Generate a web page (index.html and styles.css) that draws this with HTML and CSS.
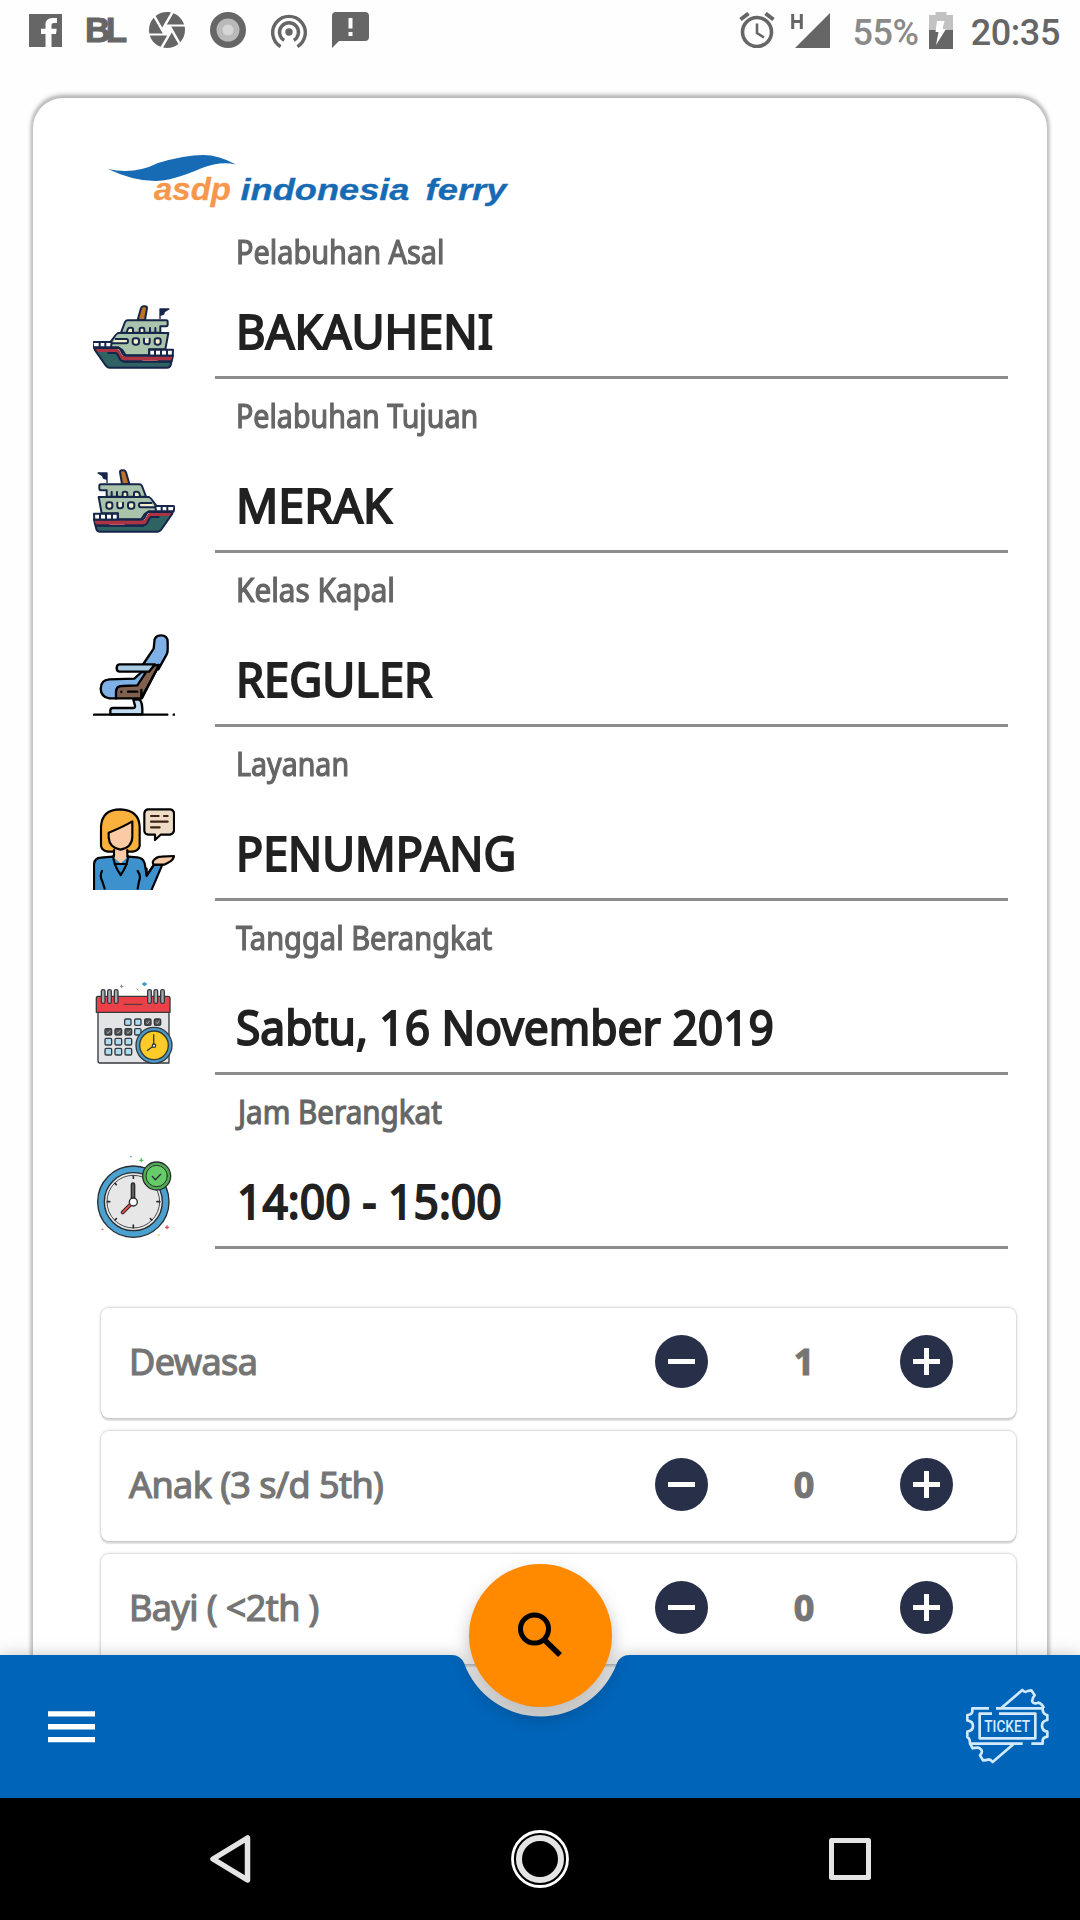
FILE: index.html
```html
<!DOCTYPE html>
<html lang="id">
<head>
<meta charset="utf-8">
<title>ASDP Indonesia Ferry</title>
<link rel="stylesheet" href="styles.css">
</head>
<body>
<header class="status">
  <div class="status-left">
    <svg width="33" height="33" viewBox="0 0 33 33"><path fill="#666" d="M0 0H33V33H22.5V20H27L27.7 14.700H22.500V11Q22.500 9 25 9H28V4H23.500Q16.500 4 16.500 10.500V14.700H12V20H16.500V33H0Z"/></svg>
    <span class="bl">BL</span>
    <svg class="aperture" width="36" height="36" viewBox="2 2 20 20"><path fill="#666" d="M9.400 10.500l4.770-8.260C13.470 2.090 12.750 2 12 2c-2.400 0-4.600.850-6.320 2.250l3.660 6.350.060-.100zM21.540 9c-.920-2.920-3.150-5.260-6-6.340L11.880 9h9.660zm.260 1h-7.490l.290.500 4.760 8.250C21 16.970 22 14.610 22 12c0-.690-.070-1.350-.200-2zM8.540 12l-3.900-6.750C3.010 7.030 2 9.390 2 12c0 .690.070 1.350.200 2h7.490l-1.150-2zm-6.080 3c.920 2.920 3.150 5.260 6 6.340L12.120 15H2.460zm11.270 0l-3.900 6.760c.700.150 1.420.240 2.170.240 2.400 0 4.600-.850 6.320-2.250l-3.660-6.350-.930 1.600z"/></svg>
    <svg class="disc" width="36" height="36" viewBox="0 0 36 36"><circle cx="18" cy="18" r="18" fill="#666"/><circle cx="18" cy="18" r="11.500" fill="#b9b9b9"/><circle cx="18" cy="18" r="5.500" fill="#d6d6d6"/></svg>
    <svg class="cast" width="36" height="34" viewBox="0 0 36 34"><g fill="none" stroke="#666" stroke-width="3.400"><path d="M9.600 32.600A16.300 16.300 0 1 1 26.400 32.600"/><path d="M13.200 26.400A9.500 9.500 0 1 1 22.800 26.400"/></g><circle cx="18" cy="18" r="3.700" fill="#666"/></svg>
    <svg class="chat" width="37" height="36" viewBox="0 0 37 36"><path fill="#666" d="M4 0H33Q37 0 37 4V25Q37 29 33 29H7L0 36V4Q0 0 4 0Z"/><path stroke="#fff" stroke-width="4" d="M18.500 6V16.500M18.500 20V24"/></svg>
  </div>
  <div class="status-right">
    <svg width="36" height="36" viewBox="0 0 36 36"><g fill="none" stroke="#666"><circle cx="18" cy="20" r="14.500" stroke-width="3.600"/><path stroke-width="4" d="M1.500 7.500L9.500 1.500M26.500 1.500L34.500 7.500"/><path stroke-width="2.600" d="M18 11.500V21L25 25.500"/></g></svg>
    <svg class="signal" width="40" height="36" viewBox="0 0 40 36"><path fill="#666" d="M39 1V36H4Z"/><path fill="none" stroke="#666" stroke-width="3" d="M1.700 2V17M10.300 2V17M1.700 9.500H10.300"/></svg>
    <span class="percent">55%</span>
    <svg class="battery" width="24" height="37" viewBox="0 0 24 37"><path fill="#c2c2c2" d="M6.500 0H17.500V3H24V18H0V3H6.500Z"/><path fill="#666" d="M0 18H24V37H0Z"/><path fill="#fff" d="M8 9H15.500L13.500 17H17L7 33L9.500 20H6.500Z"/></svg>
    <span class="clock">20:35</span>
  </div>
</header>

<main class="screen">
  <section class="card">
    <svg class="logo" width="404" height="60" viewBox="106 150 404 60">
      <path fill="#176bb5" d="M108 169Q134 175 158 163Q185 155 203 155Q219 155 236 164.500Q220 161 202 168Q172 181 155 181Q133 181 108 169Z"/>
      <g font-family="Liberation Sans, Arial, sans-serif" font-weight="bold" font-style="italic" stroke-width=".3">
        <text x="154" y="200" font-size="32" fill="#f7974b" stroke="#f7974b" textLength="77" lengthAdjust="spacingAndGlyphs">asdp</text>
        <text x="240.500" y="200" font-size="30" fill="#176bb5" stroke="#176bb5" textLength="169" lengthAdjust="spacingAndGlyphs">indonesia</text>
        <text x="425.500" y="200" font-size="30" fill="#176bb5" stroke="#176bb5" textLength="81" lengthAdjust="spacingAndGlyphs">ferry</text>
      </g>
    </svg>

    <div class="row row-first">
      <svg class="icon" viewBox="39 240 246 246"><use href="#ship" transform="translate(321 0) scale(-1 1)"/></svg>
      <div class="field"><span class="label origin-label">Pelabuhan Asal</span><span class="value origin">BAKAUHENI</span></div>
    </div>
    <div class="row">
      <svg class="icon" viewBox="39 240 246 246">
        <g id="ship" stroke="#16264a" stroke-width="6" stroke-linejoin="round" stroke-linecap="round">
          <path fill="#bd7426" d="M120 276Q120 271 126 271H131Q136 271 138 277L148 312H126Z"/>
          <path fill="#16264a" stroke-width="4" d="M54 279H81V308V298L70 294L68 287Z"/>
          <path fill="#a9c4ab" d="M62 313H178Q183 313 186 318L198 350H80V331H62Q58 331 58 325V318Q58 313 62 313Z"/>
          <path fill="#f4f0cc" d="M95 348V336M111 336V348M128 348V340Q128 335 133 335H137Q142 335 142 340V348M162 348V340Q162 335 167 335H171Q176 335 178 340L180 348"/>
          <path fill="#a9c4ab" d="M56 351H207Q214 355 219 364L231 380V394H206L194 402L184 418H114V400H65Z"/>
          <rect x="79" y="367" width="18" height="19" rx="7" fill="#f4f0cc"/>
          <path fill="#f4f0cc" d="M112 368V379Q113 385 120 385Q129 385 129 378V368"/>
          <rect x="144" y="367" width="19" height="19" rx="7" fill="#f4f0cc"/>
          <path fill="#f4f0cc" d="M214 369H182Q177 369 177 376Q177 382 182 382H224"/>
          <path fill="#fff" d="M42 401H113V419H43ZM60 401V417M78 401V417M96 401V417M226 378H279Q283 378 283 382L281 394H228ZM245 379V393M262 379V393"/>
          <path fill="#2f6262" d="M42 418L49 447Q51 455 60 455H232Q240 455 245 447L277 401H215L190 437H46Z"/>
          <path fill="#ae3443" stroke="none" d="M44 421H187Q194 421 197 414L203 403Q206 399 212 399H274L268 408H218Q211 408 209 412L200 428Q196 434 188 434H48Z"/>
          <path fill="none" d="M43 419H184Q190 419 193 414L199 402Q202 396 209 396H279M48 436H86M136 436H190Q197 436 200 431L208 416Q210 411 217 411H236"/>
        </g>
      </svg>
      <div class="field"><span class="label destination-label">Pelabuhan Tujuan</span><span class="value destination">MERAK</span></div>
    </div>
    <div class="row">
      <svg class="icon" viewBox="39 72 246 246">
        <g stroke="#000" stroke-width="7" stroke-linejoin="round" stroke-linecap="round">
          <path fill="#7fb0e6" d="M223 96Q223 76 243 76Q263 76 263 96V120Q263 127 260 133L235 178L190 162L221 116Z"/>
          <path fill="#7fb0e6" d="M185 186H205V210L185 240H110V265H88Q63 262 62 236Q62 210 88 208L163 206Z"/>
          <path fill="#82604e" d="M237 165L186 265H108V244Q110 228 125 228L172 226L211 167Z"/>
          <path fill="none" d="M184 240V264L234 172"/>
          <path fill="none" d="M124 245V246M144 245H172"/>
          <path fill="#a9cbe4" d="M118 163H225L207 185H118Q110 184 110 174Q110 164 118 163Z"/>
          <path fill="#c1dcf1" d="M160 269H180Q187 281 187 296V313H91V301Q92 294 99 294H159Q166 294 165 287Z"/>
          <path fill="none" d="M42 314H262M281 314H284"/>
        </g>
      </svg>
      <div class="field"><span class="label ship-class-label">Kelas Kapal</span><span class="value ship-class">REGULER</span></div>
    </div>
    <div class="row">
      <svg class="icon" viewBox="39 594 246 246">
        <g stroke="#000" stroke-width="6.500" stroke-linejoin="round" stroke-linecap="round">
          <path fill="#f9b03d" d="M63 650Q66 598 121 598Q177 600 179 650V708Q176 722 158 725H84Q66 722 63 708Z"/>
          <path fill="#3d91cc" d="M42 846V764Q43 744 62 743L98 740L122 765L143 740L172 742Q190 744 194 760L200 796L222 764H247L212 846Z"/>
          <path fill="#f4ae68" d="M104 763H140L122 794Z" stroke-width="4"/>
          <path fill="#3d91cc" d="M99 739Q104 770 122 795Q140 770 145 739"/>
          <path fill="#fccba5" stroke="none" d="M105 715H139V745L122 760L104 745Z"/>
          <path fill="#fccba5" d="M86 668Q130 650 157 634V680Q156 713 121 719Q88 713 86 682Z"/>
          <path fill="none" d="M102 720V739M142 720V739M104 762H140M66 783Q58 798 67 814L74 836M173 783Q184 798 177 814L173 836M200 776V798L222 764"/>
          <path fill="#fccba5" d="M222 764Q216 760 220 752Q230 740 244 740L282 738Q280 752 264 758L252 764Z"/>
          <path fill="#efdcc6" d="M203 598H271Q282 600 282 611V662Q281 671 270 674H242L225 690V674H205Q194 673 193 663V610Q194 600 203 598Z"/>
          <path fill="none" stroke="#3c2415" d="M213 618H236M252 618H263M213 635H263M213 652H239"/>
        </g>
      </svg>
      <div class="field"><span class="label service-label">Layanan</span><span class="value service">PENUMPANG</span></div>
    </div>
    <div class="row">
      <svg class="icon" viewBox="39 66 246 246">
        <g stroke="#35393d" stroke-width="4" stroke-linejoin="round">
          <path fill="#e3e4e6" d="M54 155H267V309H60Q54 309 54 302Z"/>
          <path fill="#ea4148" d="M54 109H264Q270 109 270 115V157H49V115Q49 109 54 109Z"/>
          <path fill="none" stroke-width="3" d="M131 133H187"/>
          <g fill="#a5a8ab"><rect x="64" y="89" width="11" height="41" rx="5"/><rect x="83" y="89" width="11" height="41" rx="5"/><rect x="103" y="89" width="11" height="41" rx="5"/><rect x="203" y="89" width="11" height="41" rx="5"/><rect x="222" y="89" width="11" height="41" rx="5"/><rect x="242" y="89" width="11" height="41" rx="5"/></g>
          <g fill="#abdcf2"><rect x="134" y="177" width="19" height="19" rx="4"/><rect x="164" y="177" width="19" height="19" rx="4"/><rect x="164" y="206" width="19" height="19" rx="4"/><rect x="75" y="235" width="20" height="20" rx="4"/><rect x="105" y="235" width="20" height="20" rx="4"/><rect x="135" y="235" width="20" height="20" rx="4"/><rect x="75" y="265" width="20" height="20" rx="4"/><rect x="105" y="265" width="20" height="20" rx="4"/><rect x="135" y="265" width="20" height="20" rx="4"/></g>
          <g fill="#555"><rect x="194" y="177" width="19" height="19" rx="4"/><rect x="223" y="177" width="19" height="19" rx="4"/><rect x="75" y="206" width="20" height="19" rx="4"/><rect x="105" y="206" width="20" height="19" rx="4"/><rect x="135" y="206" width="20" height="19" rx="4"/></g>
          <path fill="none" stroke="#b5b5b5" stroke-width="2.500" d="M199 187L203 191L209 182M228 187L232 191L238 182M80 216L84 220L91 211M110 216L114 220L121 211M140 216L144 220L151 211"/>
          <circle cx="222" cy="256" r="54" fill="#4b9ac6"/>
          <circle cx="222" cy="256" r="43" fill="#fccb27"/>
          <path fill="none" d="M221 223V257L201 272"/>
          <circle cx="222" cy="257" r="5" fill="#fff"/>
        </g>
        <path fill="none" stroke="#4598cb" stroke-width="6" d="M187 72H200M193.500 67V78"/><path fill="none" stroke="#888" stroke-width="3" d="M120 79H130M125 74V84M170 86L175 91"/>
      </svg>
      <div class="field"><span class="label date-label">Tanggal Berangkat</span><span class="value date">Sabtu, 16 November 2019</span></div>
    </div>
    <div class="row">
      <svg class="icon" viewBox="39 588 246 246">
        <g stroke="#292d30" stroke-width="4" stroke-linecap="round">
          <circle cx="160" cy="725" r="107" fill="#4ba1cf"/>
          <circle cx="160" cy="725" r="87" fill="#e9e9ea"/>
          <circle cx="160" cy="725" r="79" fill="#e7e7e8" stroke-width="2.500"/>
          <path fill="none" stroke-width="5" d="M160 648V655M160 795V803M82 725H89M231 725H239M105 670L109 674M211 674L215 670M105 780L109 776M211 776L215 780"/>
          <path stroke-width="14" d="M159 674V722"/><path stroke="#777" stroke-width="4" d="M159 674V722"/>
          <path stroke-width="12" d="M155 730L128 757"/><path stroke="#e64c48" stroke-width="6" d="M155 730L128 757"/>
          <circle cx="160" cy="726" r="12" fill="#fff"/>
          <circle cx="230" cy="648" r="42" fill="#4fae52"/>
          <circle cx="230" cy="648" r="32" fill="#68cb6a" stroke-width="3"/>
          <path fill="none" d="M217 649L226 659L242 643"/>
        </g>
        <g fill="none" stroke-width="4"><path stroke="#55c064" d="M178 601H190M184 595V607"/><path stroke="#e64c48" d="M255 802H267M261 796V808M65 808H70"/><path stroke="#4ba1cf" d="M150 590H155"/><path stroke="#f7d46a" d="M232 825H240"/></g>
      </svg>
      <div class="field"><span class="label time-label">Jam Berangkat</span><span class="value time">14:00 - 15:00</span></div>
    </div>

    <div class="counters">
      <div class="counter"><span class="kind">Dewasa</span><i class="btn"></i><b class="num">1</b><i class="btn plus"></i></div>
      <div class="counter"><span class="kind">Anak (3 s/d 5th)</span><i class="btn"></i><b class="num">0</b><i class="btn plus"></i></div>
      <div class="counter"><span class="kind">Bayi ( &lt;2th )</span><i class="btn"></i><b class="num">0</b><i class="btn plus"></i></div>
    </div>
  </section>
</main>

<footer class="bar">
  <svg class="bar-shape" width="1080" height="143" viewBox="0 0 1080 143"><path fill="#0064b8" d="M0 0H452Q460 0 464 8A81.500 81.500 0 0 0 617 8Q621 0 629 0H1080V143H0Z"/></svg>
  <svg class="menu" width="47" height="32" viewBox="0 0 47 32"><path stroke="#fff" stroke-width="5.400" d="M0 2.900H47M0 15.700H47M0 28.600H47"/></svg>
  <svg class="ticket" width="84" height="78" viewBox="200 144 252 234">
    <g fill="none" stroke="#d3eafc" stroke-width="8" stroke-linejoin="round">
      <path d="M269 205H219V215Q218 224 204 225V241Q221 244 221 258Q221 272 204 275V292Q212 295 212 311H370M396 311H430V300Q432 292 444 290V275Q428 272 428 257Q428 243 444 240V225Q429 223 430 205H290"/>
      <path d="M278 221H241V295H408V221H299"/>
      <path d="M306 204L369 150Q376 159 385 153L396 151L406 166Q397 175 399 185Q405 194 417 188Q427 190 434 204M213 312L220 325Q236 320 243 326Q253 334 242 346L251 361Q262 361 267 358Q274 358 280 366L342 313"/>
    </g>
    <text x="255" y="277" font-family="Roboto, sans-serif" font-weight="500" font-size="49" fill="#d3eafc" textLength="137" lengthAdjust="spacingAndGlyphs">TICKET</text>
  </svg>
  <div class="fab"><svg width="143" height="143" viewBox="0 0 143 143"><circle cx="65.500" cy="65" r="14" fill="none" stroke="#000" stroke-width="5"/><path stroke="#000" stroke-width="5.500" d="M75.500 76L91 91"/></svg></div>
</footer>

<nav class="sysnav">
  <svg width="1080" height="122" viewBox="0 1798 1080 122"><g fill="none" stroke="#e4e4e4" stroke-linejoin="round"><path stroke-width="5.500" d="M213 1859L247.500 1838V1880Z"/><circle cx="540" cy="1859" r="21" stroke-width="6"/><circle cx="540" cy="1859" r="27.500" stroke="#fff" stroke-width="2.800"/><path stroke-width="5" d="M831.500 1840.500H868.500V1877.500H831.500Z"/></g></svg>
</nav>
</body>
</html>
```
FILE: styles.css
```css
* { box-sizing: border-box; }
body {
  margin: 0;
  width: 1080px;
  height: 1920px;
  display: flex;
  flex-direction: column;
  overflow: hidden;
  background: #fefefe;
  font-family: "Noto Sans", sans-serif;
}
svg { display: block; flex: none; }

.status {
  height: 60px;
  flex: none;
  padding: 0 20px 0 29px;
  display: flex;
  justify-content: space-between;
  font-family: Roboto, sans-serif;
  font-weight: 500;
  font-size: 36px;
  color: #666;
}
.status-left, .status-right { display: flex; align-items: center; }
.bl {
  width: 41px;
  margin: 0 23px 0 23px;
  font: bold 35px/60px "Liberation Sans", sans-serif;
  letter-spacing: -4.5px;
  -webkit-text-stroke: 1px #666;
}
.disc { margin-left: 25px; }
.cast { margin: 2px 25px 0; }
.signal { margin: 0 21px 0 16px; }
.percent { color: #8a8a8a; margin: 5px 10px 0 0; letter-spacing: -.4px; }
.clock { margin: 5px 0 0 18px; letter-spacing: -.4px; }

/* The list runs on under the bottom bar and shows through its notch. */
.screen { height: 1738px; margin-bottom: -143px; flex: none; overflow: hidden; padding: 38px 33px 0; }
.card {
  height: 1800px;
  padding-top: 52px;
  border-radius: 30px;
  background: #fff;
  box-shadow: 0 0 3px 3px rgba(0, 0, 0, .16), 0 -3px 5px 1px rgba(0, 0, 0, .15);
}
.logo { margin: 0 0 5px 73px; }

.row {
  height: 174px;
  padding: 0 39px 0 60px;
  display: flex;
  align-items: flex-end;
  gap: 40px;
}
.icon { width: 82px; height: 82px; margin-bottom: 11px; }
.row-first { height: 164px; }
.row-first .icon { margin-bottom: 1px; }
.field {
  flex: 1;
  height: 100%;
  padding: 15px 0 13px 21px;
  display: flex;
  flex-direction: column;
  align-items: flex-start;
  justify-content: space-between;
  border-bottom: 3px solid #8c8c8c;
  white-space: nowrap;
}
/* Each text is slightly condensed to its own width. */
.label, .value { transform-origin: left; }
.label { font-size: 32px; line-height: 44px; color: #666; -webkit-text-stroke: 1.2px #666; }
.value { font-size: 48px; line-height: 64px; color: #212121; -webkit-text-stroke: 2px #212121; }
.origin-label { transform: scaleX(.903); }
.destination-label { transform: scaleX(.895); }
.ship-class-label { transform: scaleX(.928); }
.service-label { transform: scaleX(.894); }
.date-label { transform: scaleX(.908); }
.time-label { transform: translateX(2px) scaleX(.925); }
.origin { transform: scaleX(.944); }
.destination { transform: scaleX(.972); }
.ship-class { transform: scaleX(.942); }
.service { transform: scaleX(.935); }
.date { transform: scaleX(.924); }
.time { transform: translateX(1px) scaleX(.926); }

.counters { margin: 59px 31px 0 68px; display: grid; gap: 13px; }
.counter {
  height: 110px;
  padding: 0 63px 4px 28px;
  display: flex;
  align-items: center;
  border-radius: 8px;
  background: #fff;
  box-shadow: 0 0 0 1px rgba(0, 0, 0, .05), 0 0 3px 1px rgba(0, 0, 0, .12), 0 3px 1px rgba(0, 0, 0, .1);
  font-size: 36px;
  color: #757575;
}
.kind { flex: 1; white-space: nowrap; letter-spacing: -.58px; -webkit-text-stroke: 1.2px #757575; }
.num { width: 192px; text-align: center; -webkit-text-stroke: 1px #757575; }
.btn {
  width: 53px;
  height: 53px;
  border-radius: 50%;
  background: linear-gradient(#fff, #fff) center / 27px 5px no-repeat #282f48;
}
.plus {
  background: linear-gradient(#fff, #fff) center / 27px 5px no-repeat,
    linear-gradient(#fff, #fff) center / 5px 27px no-repeat #282f48;
}

.bar {
  position: relative;
  height: 143px;
  flex: none;
  display: flex;
  align-items: center;
  justify-content: space-between;
  padding: 0 30px 0 48px;
}
.bar-shape { position: absolute; left: 0; top: 0; filter: drop-shadow(0 0 8px rgba(0, 0, 0, .22)); }
.menu, .ticket { position: relative; }
.fab {
  position: absolute;
  left: 469px;
  top: -91px;
  width: 143px;
  height: 143px;
  border-radius: 50%;
  background: #ff8a00;
  box-shadow: 0 9px 18px rgba(0, 0, 0, .26);
}

.sysnav { position: relative; height: 122px; flex: none; background: #000; }
```
